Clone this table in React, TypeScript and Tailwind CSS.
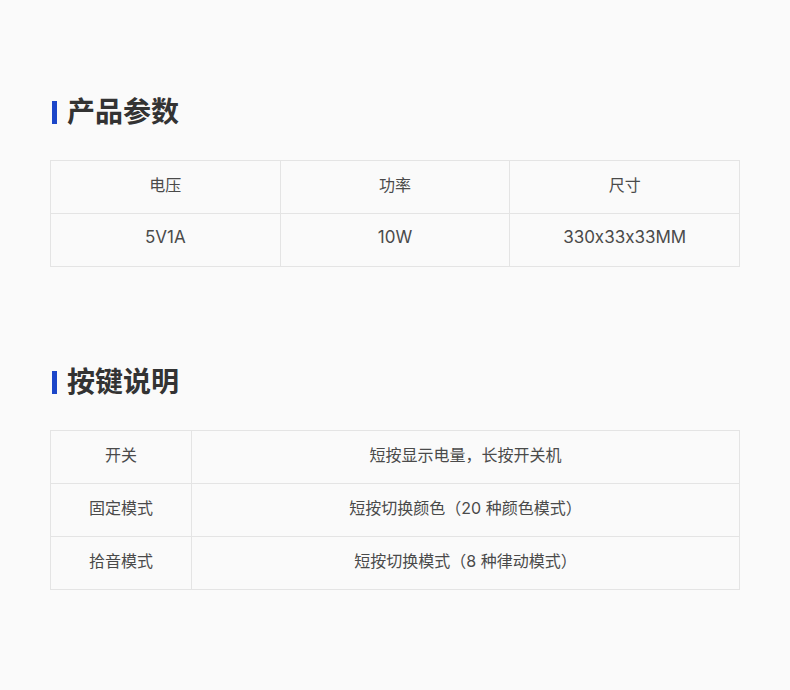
const font = { fontFamily: 'Inter, "Noto Sans CJK SC", sans-serif' };

function Title({ text }: { text: string }) {
    return (
        <div className="flex items-center h-[28px]">
            <span className="w-[5px] h-[23px] bg-[#1c46c9] ml-[2px]" />
            <h2 className="ml-[10px] text-[28px] leading-[28px] font-bold text-[#333333]">{text}</h2>
        </div>
    );
}

const keys = [
    ['开关', '短按显示电量，长按开关机'],
    ['固定模式', '短按切换颜色（20 种颜色模式）'],
    ['拾音模式', '短按切换模式（8 种律动模式）'],
];

const cell = 'border border-[#e4e4e4] text-center pb-[4px]';

export default function App() {
    return (
        <div
            className="w-[790px] h-[690px] bg-[#fafafa] px-[50px] pt-[98px] [font-feature-settings:'calt'_0]"
            style={font}
        >
            <Title text="产品参数" />
            <table className="mt-[34px] w-[690px] border-collapse text-[16px] text-[#4a4a4a] table-fixed">
                <tbody>
                    <tr className="h-[53px]">
                        <td className={cell}>电压</td>
                        <td className={cell}>功率</td>
                        <td className={cell}>尺寸</td>
                    </tr>
                    <tr className="h-[53px] text-[17px]">
                        <td className={cell}>5V1A</td>
                        <td className={cell}>10W</td>
                        <td className={cell}>330x33x33MM</td>
                    </tr>
                </tbody>
            </table>

            <div className="mt-[101px]">
                <Title text="按键说明" />
            </div>
            <table className="mt-[34px] w-[690px] border-collapse text-[16px] text-[#4a4a4a] table-fixed">
                <colgroup>
                    <col className="w-[141px]" />
                    <col />
                </colgroup>
                <tbody>
                    {keys.map(([k, v]) => (
                        <tr key={k} className="h-[53px]">
                            <td className={cell}>{k}</td>
                            <td className={cell}>{v}</td>
                        </tr>
                    ))}
                </tbody>
            </table>
        </div>
    );
}
